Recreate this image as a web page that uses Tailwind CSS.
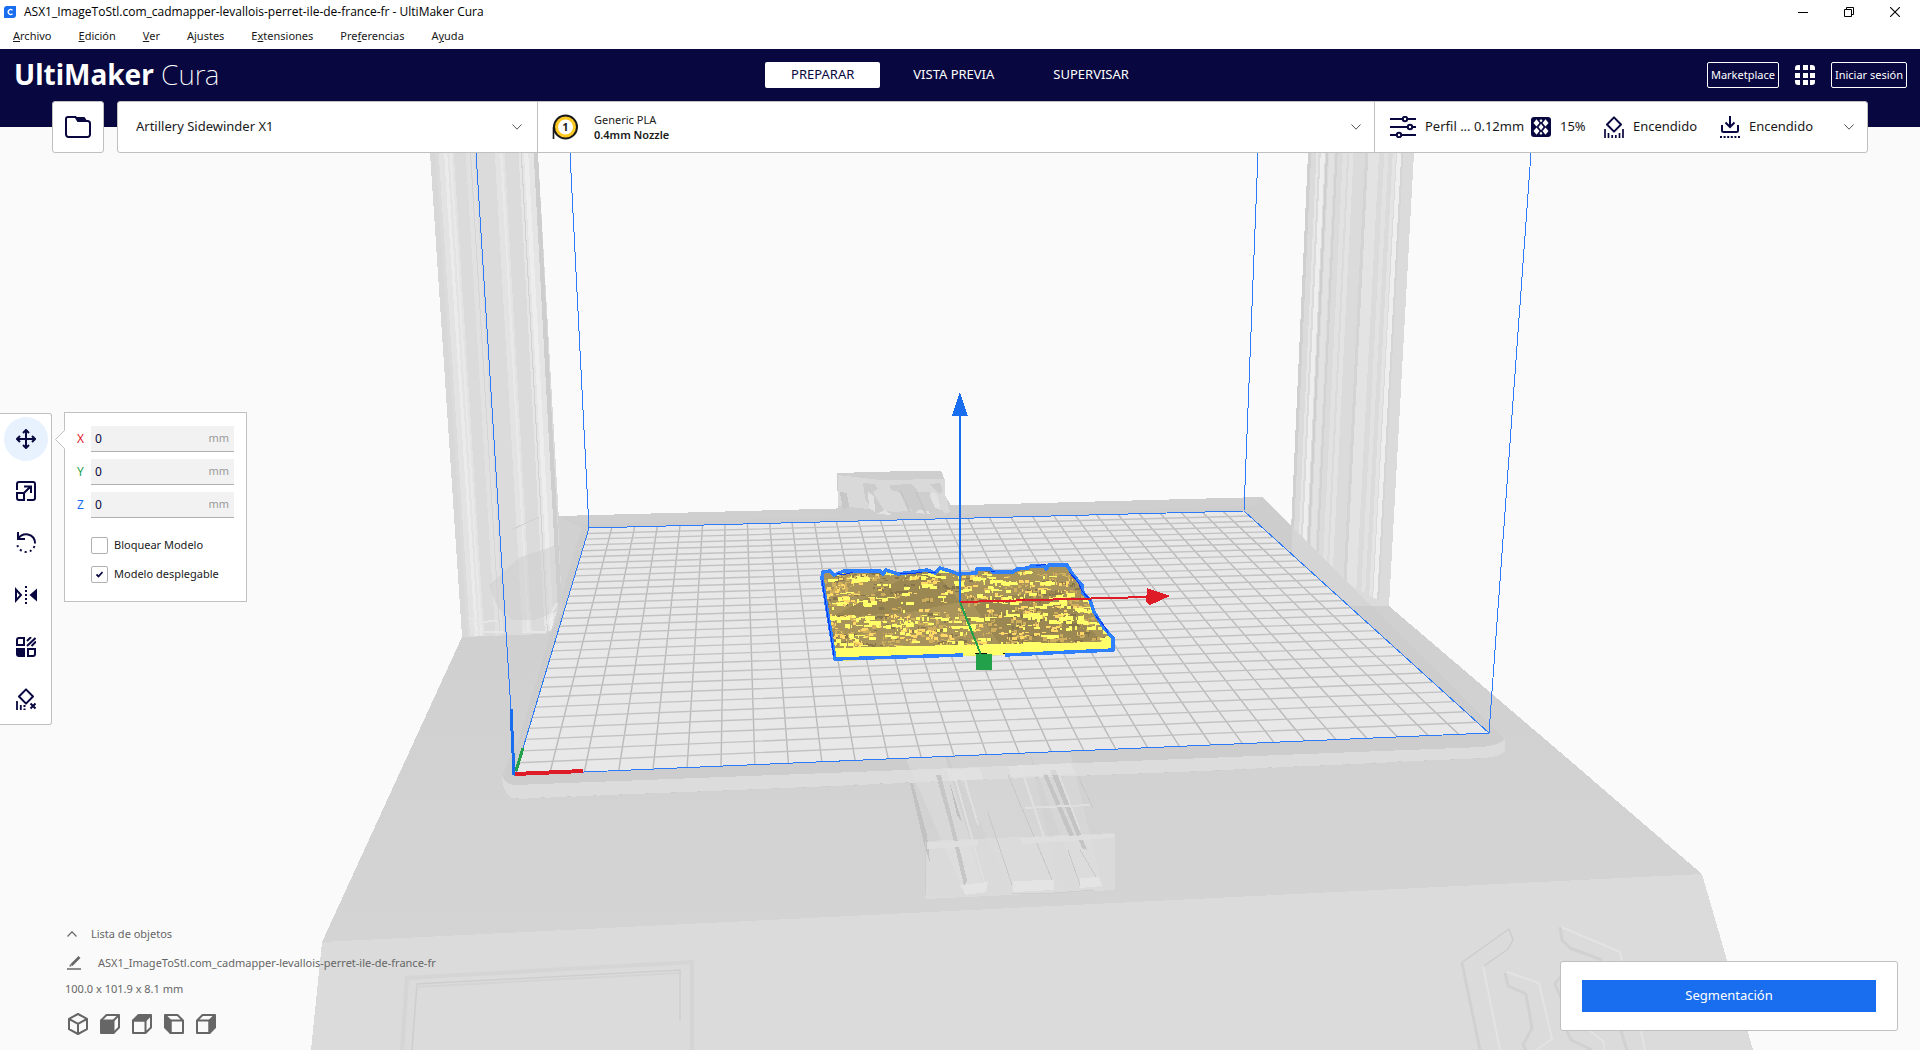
<!DOCTYPE html>
<html lang="es">
<head>
  <meta charset="UTF-8">
  <meta name="viewport" content="width=device-width, initial-scale=1.0">
  <title>UltiMaker Cura</title>
  <script src="https://cdn.jsdelivr.net/npm/@tailwindcss/browser@4"></script>
</head>
<body class="h-screen flex flex-col overflow-hidden bg-[#fafafa] font-['Noto_Sans',sans-serif] text-[11px] text-[#191919]">

  <!-- Title bar -->
  <div class="flex items-center justify-between h-6 bg-white text-black shrink-0">
    <div class="flex items-center gap-2 pl-1">
      <svg class="w-3 h-3" viewBox="0 0 12 12"><path d="M3 0h9v9a3 3 0 0 1-3 3H0V3a3 3 0 0 1 3-3z" fill="#196ef0"/><path d="M8.500 4.200A2.500 2.500 0 1 0 8.500 7.800" fill="none" stroke="#fff" stroke-width="1.300"/></svg>
      <span class="font-['Open_Sans',sans-serif] text-xs">ASX1_ImageToStl.com_cadmapper-levallois-perret-ile-de-france-fr - UltiMaker Cura</span>
    </div>
    <div class="flex items-center gap-9 pr-5">
      <button aria-label="Minimizar"><svg class="w-2.5 h-2.5" viewBox="0 0 10 10"><path d="M0 5.500h10" stroke="#000"/></svg></button>
      <button aria-label="Restaurar"><svg class="w-2.5 h-2.5" viewBox="0 0 10 10" fill="none" stroke="#000"><path d="M.5 2.500h7v7h-7zM2.500 2.500v-2h7v7h-2"/></svg></button>
      <button aria-label="Cerrar"><svg class="w-2.5 h-2.5" viewBox="0 0 10 10"><path d="M0 0l10 10M10 0L0 10" stroke="#000" stroke-width="1.100"/></svg></button>
    </div>
  </div>

  <!-- Menu -->
  <nav class="flex items-center gap-[27px] h-[25px] pl-[13px] bg-white shrink-0">
    <button><u>A</u>rchivo</button>
    <button><u>E</u>dición</button>
    <button><u>V</u>er</button>
    <button>A<u>j</u>ustes</button>
    <button>E<u>x</u>tensiones</button>
    <button>Pre<u>f</u>erencias</button>
    <button>A<u>y</u>uda</button>
  </nav>

  <!-- Header, the toolbar hangs out of it -->
  <header class="relative z-10 h-[78px] bg-[#08073f] text-white shrink-0">
    <div class="grid grid-cols-[1fr_auto_1fr] items-center h-[52px]">
      <div class="pl-[14px] pb-0.5 text-[28px] leading-none"><span class="font-bold">UltiMaker</span> <span class="font-extralight">Cura</span></div>
      <div class="flex gap-[7px] text-[13px]">
        <button class="h-[26px] px-[26px] rounded-xs bg-white text-[#08073f]">PREPARAR</button>
        <button class="h-[26px] px-[26px]">VISTA PREVIA</button>
        <button class="h-[26px] px-[26px]">SUPERVISAR</button>
      </div>
      <div class="flex items-center justify-end gap-4 pr-[13px]">
        <button class="h-[26px] px-[3px] border border-white rounded-xs">Marketplace</button>
        <button aria-label="Aplicaciones"><svg class="w-5 h-5" viewBox="0 0 20 20" fill="#fff"><path d="M3 0h2v5H0V3a3 3 0 0 1 3-3zM8 0h5v5H8zM15 0h2a3 3 0 0 1 3 3v2h-5zM0 8h5v5H0zM8 8h5v5H8zM15 8h5v5h-5zM0 15h5v5H3a3 3 0 0 1-3-3zM8 15h5v5H8zM15 15h5v2a3 3 0 0 1-3 3h-2z"/></svg></button>
        <button class="h-[26px] px-[3px] border border-white rounded-xs">Iniciar sesión</button>
      </div>
    </div>

    <div class="flex gap-[13px] px-[52px] h-[52px] text-[#191919]">
      <button aria-label="Abrir archivo" class="grid place-items-center w-[52px] h-[52px] bg-white border border-[#c0c0c0] rounded-[3px]">
        <svg class="w-[26px] h-[22px]" viewBox="0 0 26 22"><path d="M3 1h7.500l2.500 4h9.500a2.500 2.500 0 0 1 2.500 2.500V18.500a2.500 2.500 0 0 1-2.500 2.500H3.500A2.500 2.500 0 0 1 1 18.500V3a2 2 0 0 1 2-2z" fill="none" stroke="#08073f" stroke-width="2"/><path d="M10.500 1h9l3 4.500h-9.500z" fill="#08073f"/></svg>
      </button>
      <div class="flex flex-1 h-[52px] bg-white border border-[#c0c0c0] rounded-[3px] text-[13px]">
        <button class="flex items-center justify-between w-[420px] pl-[18px] pr-[15px] border-r border-[#c0c0c0]">
          <span>Artillery Sidewinder X1</span>
          <svg class="w-2.5 h-1.5" viewBox="0 0 10 6"><path d="M.5.5L5 5.200 9.500.5" fill="none" stroke="#555"/></svg>
        </button>
        <button class="flex flex-1 items-center pl-[14px] pr-[13px] border-r border-[#c0c0c0] text-left text-[11px]">
          <svg class="w-[26px] h-[26px]" viewBox="0 0 26 26"><circle cx="13.500" cy="13" r="11.500" fill="#ffc924" stroke="#191919" stroke-width="2"/><path d="M1.500 25V13" stroke="#191919" stroke-width="1.600"/><circle cx="13.500" cy="13" r="7.500" fill="#fff"/><text x="13.500" y="17" text-anchor="middle" font-size="11" font-weight="700" fill="#191919">1</text></svg>
          <span class="flex-1 pl-4 leading-[15px]">Generic PLA<br><b class="font-semibold">0.4mm Nozzle</b></span>
          <svg class="w-2.5 h-1.5" viewBox="0 0 10 6"><path d="M.5.5L5 5.200 9.500.5" fill="none" stroke="#555"/></svg>
        </button>
        <button class="flex items-center w-[492px] pl-[15px] pr-[13px]">
          <svg class="w-[26px] h-[22px]" viewBox="0 0 26 22" fill="none" stroke="#08073f" stroke-width="2"><path d="M0 3h12M18 3h8M0 11h17M23 11h3M0 19h6M12 19h14"/><circle cx="15" cy="3" r="2.200"/><circle cx="20" cy="11" r="2.200"/><circle cx="9" cy="19" r="2.200"/></svg>
          <span class="w-[115px] pl-[9px] text-left whitespace-nowrap">Perfil ... 0.12mm</span>
          <svg class="w-5 h-5" viewBox="0 0 20 20"><rect width="20" height="20" rx="3" fill="#08073f"/><g fill="#fff"><path d="M5.500 2.200L8.500 6 5.500 9.500 2.500 6zM14.500 2.200l3 3.800-3 3.500-3-3.500zM10 6.800l2.500 3.200-2.500 3.200L7.500 10zM5.500 10.500l3 3.500-3 3.800-3-3.800zM14.500 10.500l3 3.500-3 3.800-3-3.800zM10 2l1.500 1.700L10 5.300 8.500 3.700zM10 14.700l1.500 1.600L10 18l-1.500-1.700z"/></g></svg>
          <span class="w-[53px] pl-[9px] text-left">15%</span>
          <svg class="w-5 h-[22px]" viewBox="0 0 20 22" fill="none" stroke="#08073f" stroke-width="2"><path d="M10 1.400L17 8.500 10 15.600 3 8.500z" stroke-linejoin="round"/><path d="M1 22v-9M4.500 22v-5M8.200 22v-3M11.800 22v-3M15.500 22v-5M19 22v-9" stroke-width="1.700"/></svg>
          <span class="w-[96px] pl-[9px] text-left">Encendido</span>
          <svg class="w-5 h-[22px]" viewBox="0 0 20 22" fill="none" stroke="#08073f" stroke-width="2"><path d="M10 0v10.500M5.500 6.500L10 11l4.500-4.500M2 9v5.500a1.500 1.500 0 0 0 1.500 1.500h13a1.500 1.500 0 0 0 1.500-1.500V9"/><path d="M0 21h20" stroke-dasharray="2 1.600"/></svg>
          <span class="flex-1 pl-[9px] text-left">Encendido</span>
          <svg class="w-2.5 h-1.5" viewBox="0 0 10 6"><path d="M.5.5L5 5.200 9.500.5" fill="none" stroke="#555"/></svg>
        </button>
      </div>
    </div>
  </header>

  <main class="relative flex flex-1 flex-col justify-between min-h-0">
    <!-- 3D view -->
    <svg class="absolute inset-0 w-full h-full" viewBox="0 127 1920 923" preserveAspectRatio="xMidYMid slice" shape-rendering="crispEdges">
      <defs>
        <linearGradient id="top" x1="0" y1="0" x2="0" y2="1"><stop offset="0" stop-color="#cfcfcf"/><stop offset="1" stop-color="#d4d4d4"/></linearGradient>
        <clipPath id="modelClip"><path d="M823 572l7-1 4 4 10-4h36l3 3 3-4 12 4 29-4 8 3 5-5 13 4 5 2 18-1 1-4h13l3 3h20l4-3 11-1 3-2h14l1 3 3-4h18l6 10 9 10 1 8 7 7 4 12 10 16 9 10v12l-109 5-41 1-128 5-13-81z"/></clipPath>
      </defs>

      <!-- base -->
      <path d="M462 637L545 630 1300 560 1350 606 1389 606 1560 752 1702 874 322 942z" fill="url(#top)"/>
      <path d="M322 942L1702 874 1753 1050H311z" fill="#dbdbdb"/>

      <!-- columns, streaks are filled in below -->
      <path d="M430 153H538L559 520 563 620 545 634 462 637z" fill="#dbdbdb"/>
      <g id="leftColumn"></g>
      <path d="M489 585L520 557 556 545 561 610 535 620H512L498 608z" fill="#cdcdcd" opacity=".5"/>
      <path d="M468 618l10 4 20 -1M474 632h30M522 632h24M545 625l12-22" fill="none" stroke="#e6e6e6" stroke-width="2"/>
      <path d="M511 530l28-13" stroke="#d0d0d0"/>
      <path d="M1308 153H1414L1389 606H1350L1292 553z" fill="#dbdbdb"/>
      <g id="rightColumn"></g>

      <!-- heated bed -->
      <path d="M558 516L1262 497 1505 739Q1507 747 1483 748L515 785Q500 784 503 774L543 650 562 610z" fill="#cdcdcd"/>
      <path d="M558 516L582 527 520 735 503 774 543 650 562 610z" fill="#d1d1d1"/>
      <path d="M558 516L1262 497 1252 506 580 524z" fill="#cfcfcf"/>
      <path d="M1292 527L1292 553 1350 606H1372L1372 606z" fill="#dadada" opacity=".6"/>
      <path d="M502 774Q503 784 515 785L880 771 1180 759 1483 747Q1503 744 1505 738V751Q1500 757 1483 758L1180 772 880 784 515 799Q502 796 502 774z" fill="#dcdcdc"/>
      <path d="M515 799L880 784 1180 772 1483 758" fill="none" stroke="#cbcbcb" stroke-dasharray="4 22"/>

      <!-- bracket at the back -->
      <path d="M837 473L870 472 910 471 941 471 945 480V495L956 515 842 520 838 508z" fill="#cecece"/>
      <path d="M838 475L880 480 945 479V494L950 512 945 514 930 492H915L918 510 895 512 860 508 838 506z" fill="#d9d9d9"/>
      <path d="M863 483l12 1 3 5-5 3 12 20h-12l-8-14zM890 485l22-1 5 6 8 20h-14l-12-18-8-2zM930 484l10-1 3 8-4 3z" fill="#cccccc"/>
      <path d="M868 492l6 4 1 16-6-4zM931 492l6 2 4 16-6-2-5-12zM877 514l8-4 7 5zM915 513l4-3 10 1 1 3z" fill="#e2e2e2"/>
      <path d="M841 493l5 1 2 12-4 2zM900 490l10 22M916 492l10 22" fill="#c8c8c8" stroke="#c6c6c6" stroke-width="2"/>

      <!-- bed grid -->
      <path d="M589 528L1244 511 1489 733 515 775z" fill="#e8e8e8"/>
      <g shape-rendering="auto" fill="none" stroke-width="1.400">
        <path id="gridCols" stroke="#bababa"/>
        <path id="gridRows" stroke="#c2c2c2"/>
      </g>

      <!-- rails in front -->
      <path d="M925 841L1115 833V890L925 899z" fill="#e0e0e0" opacity=".55"/>
      <path d="M905 757L945 756 985 892 965 894z" fill="#e0e0e0" opacity=".4"/>
      <path d="M947 755L1030 753 1060 892 1014 893z" fill="#dedede" opacity=".35"/>
      <path d="M1030 753L1070 752 1103 887 1080 889z" fill="#e0e0e0" opacity=".35"/>
      <path d="M910 783L913 783 927 835 930 862 925 848z" fill="#c2c2c2"/>
      <path d="M936 775L950 825 965 890 967 880 955 830 941 775z" fill="#c6c6c6"/>
      <path d="M949 780L962 822 957 815z" fill="#bfbfbf"/>
      <path d="M1050 770L1056 770 1087 850 1082 848zM1043 774L1047 774 1074 835 1070 838z" fill="#c4c4c4"/>
      <path d="M953 770L985 885M962 770L978 825M1055 765L1080 830M1020 765L1045 840" fill="none" stroke="#dfdfdf" stroke-width="2"/>
      <path d="M988 813L1012 885M1008 775L1027 820 1053 882M1078 776L1093 808M1080 850L1101 885M1068 850L1080 885" fill="none" stroke="#c8c8c8"/>
      <path d="M925 841V895M1012 893l42 0 40-3" fill="none" stroke="#cdcdcd"/>
      <path d="M927 842L978 840V846L927 849zM1020 838L1114 834V838L1022 844zM1025 807L1090 804V806L1025 809z" fill="#dfdfdf"/>
      <path d="M947 769L980 768 983 779 950 781zM1008 766L1070 763 1076 774 1012 777z" fill="#e5e5e5" opacity=".6"/>
      <path d="M960 885L988 882 986 892 966 895zM1013 881L1054 880V890L1013 892zM1080 878L1099 877 1102 886 1080 888z" fill="#e4e4e4"/>

      <!-- display and badge on the front face -->
      <g shape-rendering="auto">
      <path d="M402 1050L407 978 692 962V1050" fill="none" stroke="#d5d5d5" stroke-width="4"/>
      <path d="M412 1050L417 984 680 970V1020" fill="none" stroke="#cecece" stroke-width="1.500"/>
      <path d="M416 987L680 973" stroke="#d4d4d4" stroke-width="2"/>
      </g>
      <g fill="none" stroke-linejoin="round" stroke-width="1.500" shape-rendering="auto">
        <path d="M1461 963L1509 929 1513 940 1508 949 1484 966" stroke="#cdcdcd"/>
        <path d="M1483 966L1500 1050M1561 927L1620 952 1622 962M1641 1031L1645 1050M1507 972L1539 983 1552 1039 1536 1050" stroke="#e3e3e3" stroke-width="2"/>
        <path d="M1462 963L1480 1050M1560 927L1562 940 1570 948 1602 960M1505 973L1508 986 1526 994 1532 1028 1523 1045 1526 1050M1621 1031L1627 1050M1567 1031L1571 1040 1592 1050M1560 977L1555 984 1562 1000" stroke="#d1d1d1" stroke-width="3"/>
        <path d="M1590 1031L1604 1042V1050" stroke="#e5e5e5"/>
      </g>

      <!-- build volume -->
      <g fill="none" stroke="#2b7bf8">
        <path d="M515 775L589 528 1244 511 1489 733z"/>
        <path d="M589 528L570 153M515 775L476 153M1244 511L1258 153M1489 733L1531 153"/>
      </g>
      <path d="M515 774L583 771" stroke="#dd1c28" stroke-width="4"/>
      <path d="M516 771L523 748" stroke="#22a04a" stroke-width="3"/>
      <path d="M514 775L511 709" stroke="#196ef0" stroke-width="3"/>

      <!-- city model -->
      <g clip-path="url(#modelClip)">
        <path d="M815 555H1120V665H815z" fill="#a8935a"/>
        <path d="M930 565L960 602 910 612 830 618 880 590zM970 600L1060 590 1100 640 1000 645z" fill="#94814e" opacity=".7"/>
        <path id="shade" fill="#86744a"/>
        <path id="tan" fill="#cfae5c"/>
        <path id="orange" fill="#ffd866"/>
        <path id="yellow" fill="#ffff69"/>
        <path d="M833 648L960 645 1100 642 1105 637 1113 634V652L833 662z" fill="#ffff69"/>
      </g>
      <g fill="none" stroke="#2f80ff" stroke-width="3.500" stroke-linejoin="round">
        <path d="M963 655l-128 4-13-81 1-6 7-1 4 4 10-4h36l3 3 3-4 12 4 29-4 8 3 5-5 13 4 5 2 18-1 1-4h13l3 3h20l4-3 11-1 3-2h14l1 3 3-4h18l6 10 9 10 1 8 7 7 4 12 10 16 9 10v12l-108 5"/>
        <path d="M837 573l6 2 10-3M900 573l10 1 12-2M928 572l8 1M991 571l4 1M1036 566l10-2M1069 572l9 10 4 9 9 10M1095 615l10 12 3 6M822 580l12 76" stroke="#0b35f0" stroke-width="1"/>
      </g>
      <path d="M975 653h12M1003 653h2" stroke="#111"/>

      <!-- move gizmo -->
      <path d="M960 602V415" stroke="#196ef0" stroke-width="2"/>
      <path d="M960 392L968 416H952z" fill="#196ef0"/>
      <path d="M960 602L1147 597" stroke="#dd1c28" stroke-width="2"/>
      <path d="M1147 588L1170 596 1150 605 1146 602z" fill="#dd1c28"/>
      <path d="M960 602L981 655" stroke="#22a04a" stroke-width="2"/>
      <path d="M976 654h16v16h-16z" fill="#22a04a"/>
    </svg>

    <!-- Tools -->
    <div class="relative flex items-start gap-[13px] pt-[285px]">
      <div class="flex flex-col gap-2 w-[52px] h-[312px] pt-[3px] pl-1 mt-px bg-white border border-l-0 border-[#c0c0c0] rounded-r-[3px]">
        <button aria-label="Mover" class="grid place-items-center w-11 h-11 rounded-full bg-[#e8f2fe]">
          <svg class="w-5 h-5" viewBox="0 0 20 20" fill="none" stroke="#08073f" stroke-width="2"><path d="M10 1.500v17M1.500 10h17M7 4l3-3 3 3M7 16l3 3 3-3M4 7l-3 3 3 3M16 7l3 3-3 3"/></svg>
        </button>
        <button aria-label="Escalar" class="grid place-items-center w-11 h-11">
          <svg class="w-5 h-5" viewBox="0 0 20 20" fill="none" stroke="#08073f" stroke-width="2"><path d="M1 9V3a2 2 0 0 1 2-2h14a2 2 0 0 1 2 2v14a2 2 0 0 1-2 2h-6M1 12h7v7H3a2 2 0 0 1-2-2zM8 12l6-6M8 5.500h7V12"/></svg>
        </button>
        <button aria-label="Rotar" class="grid place-items-center w-11 h-11">
          <svg class="w-5 h-[22px]" viewBox="0 0 20 22" fill="none" stroke="#08073f" stroke-width="2"><path d="M2 0v7h7M2.500 6.500C5 2.500 9 2 12 2.500c4.500 1 7 4.500 7 9"/><path d="M18.500 14C17 18 14 20 10 20S1.500 17 1 11" stroke-dasharray="2 3.200"/></svg>
        </button>
        <button aria-label="Espejo" class="grid place-items-center w-11 h-11">
          <svg class="w-[22px] h-5" viewBox="0 0 22 20"><path d="M1 4.500v11L6 10z" fill="none" stroke="#08073f" stroke-width="2"/><path d="M22 3.500v13L14.500 10z" fill="#08073f"/><path d="M11 1v19" stroke="#08073f" stroke-width="2" stroke-dasharray="2 2"/></svg>
        </button>
        <button aria-label="Ajustes por modelo" class="grid place-items-center w-11 h-11">
          <svg class="w-5 h-5" viewBox="0 0 20 20" fill="none" stroke="#08073f" stroke-width="2"><path d="M1 3a2 2 0 0 1 2-2h5v7H1zM12 12h7v5a2 2 0 0 1-2 2h-5z"/><path d="M0 11h9v9H3a3 3 0 0 1-3-3z" fill="#08073f" stroke="none"/><path d="M11 4l4-4M11 9l8.500-8M15.500 9L20 4.500"/></svg>
        </button>
        <button aria-label="Bloqueador de soporte" class="grid place-items-center w-11 h-11">
          <svg class="w-5 h-[22px]" viewBox="0 0 20 22" fill="none" stroke="#08073f" stroke-width="2"><path d="M10 1.400L17 8.500 10 15.600 3 8.500z" stroke-linejoin="round"/><path d="M1 22v-9M4.800 22v-5" stroke-width="1.800"/><path d="M8.500 17v5" stroke-dasharray="2 1.500"/><path d="M14.500 15.500l5 5M19.500 15.500l-5 5"/></svg>
        </button>
      </div>

      <div class="relative w-[183px] h-[190px] pt-[13px] px-[12px] -ml-px bg-white border border-[#c0c0c0]">
        <svg class="absolute -left-[10px] top-[17px] w-[10px] h-5" viewBox="0 0 10 20"><path d="M10 0L.5 9.500 10 19z" fill="#fff"/><path d="M9.500 .5L.5 9.500 9.500 18.500" fill="none" stroke="#c0c0c0"/></svg>
        <div class="flex flex-col gap-[7px]">
          <div class="flex items-center h-[26px]">
            <label for="x" class="w-[14px] text-xs text-[#dd1c28]">X</label>
            <div class="flex items-center flex-1 h-full px-1 bg-[#f2f2f2] border-b border-[#b0b0b0]"><input id="x" value="0" class="w-20 flex-1 outline-none text-xs text-[#08073f]"><span class="text-[#9a9a9a] pr-px">mm</span></div>
          </div>
          <div class="flex items-center h-[26px]">
            <label for="y" class="w-[14px] text-xs text-[#22a04a]">Y</label>
            <div class="flex items-center flex-1 h-full px-1 bg-[#f2f2f2] border-b border-[#b0b0b0]"><input id="y" value="0" class="w-20 flex-1 outline-none text-xs text-[#08073f]"><span class="text-[#9a9a9a] pr-px">mm</span></div>
          </div>
          <div class="flex items-center h-[26px]">
            <label for="z" class="w-[14px] text-xs text-[#196ef0]">Z</label>
            <div class="flex items-center flex-1 h-full px-1 bg-[#f2f2f2] border-b border-[#b0b0b0]"><input id="z" value="0" class="w-20 flex-1 outline-none text-xs text-[#08073f]"><span class="text-[#9a9a9a] pr-px">mm</span></div>
          </div>
        </div>
        <div class="flex flex-col gap-3 pt-[19px] pl-[14px]">
          <label class="flex items-center gap-[6px] h-[17px]"><input type="checkbox" class="appearance-none w-[17px] h-[17px] bg-white border border-[#b0b0b0] rounded-[2px]">Bloquear Modelo</label>
          <label class="relative flex items-center gap-[6px] h-[17px]"><input type="checkbox" checked class="appearance-none w-[17px] h-[17px] bg-white border border-[#b0b0b0] rounded-[2px]">Modelo desplegable
            <svg class="absolute left-[5px] top-[5px] w-[7px] h-[7px]" viewBox="0 0 7 7"><path d="M.5 3.500L2.500 5.500 6.500 1" fill="none" stroke="#08073f" stroke-width="1.800"/></svg>
          </label>
        </div>
      </div>
    </div>

    <!-- Object list and slice button -->
    <div class="relative flex justify-between items-end pl-[65px] pr-[22px] text-[#666]">
      <div class="pb-[15px]">
        <button class="flex items-center h-[18px] pl-[2px]">
          <svg class="w-2.5 h-1.5 mr-[14px]" viewBox="0 0 10 6"><path d="M.5 5.500L5 .8 9.500 5.500" fill="none" stroke="#666" stroke-width="1.200"/></svg>Lista de objetos
        </button>
        <button class="flex items-center h-[18px] mt-[11px] pl-[2px]">
          <svg class="w-[14px] h-[14px] mr-[17px]" viewBox="0 0 14 14"><path d="M0 13h14" stroke="#666" stroke-width="1.500"/><path d="M4.500 9L12.500 1" stroke="#666" stroke-width="2.600"/><path d="M3 8l2 2-2.500 .8z" fill="#666"/></svg>ASX1_ImageToStl.com_cadmapper-levallois-perret-ile-de-france-fr
        </button>
        <p class="h-[18px] leading-[18px] mt-2">100.0 x 101.9 x 8.1 mm</p>
        <div class="flex gap-3 mt-[15px] pl-[3px]">
          <button aria-label="Vista 3D"><svg class="w-5 h-[22px] block" viewBox="0 0 20 22" fill="none" stroke="#666" stroke-width="2" stroke-linejoin="round"><path d="M10 1l9 4.800v10.400L10 21l-9-4.800V5.800zM1 5.800l9 5 9-5M10 10.800V21"/></svg></button>
          <button aria-label="Vista frontal"><svg class="w-5 h-[22px] block" viewBox="0 0 20 22" fill="none" stroke="#666" stroke-width="2" stroke-linejoin="round"><path d="M1 7.500L6.500 2H19v12.500L13.500 20M13.500 7.500L19 2"/><path d="M1 7.500h12.500V20H1z" fill="#666"/></svg></button>
          <button aria-label="Vista superior"><svg class="w-5 h-[22px] block" viewBox="0 0 20 22" fill="none" stroke="#666" stroke-width="2" stroke-linejoin="round"><path d="M1 7.500h12.500V20H1zM19 2v12.500L13.500 20"/><path d="M1 7.500L6.500 2H19l-5.500 5.500z" fill="#666"/></svg></button>
          <button aria-label="Vista izquierda"><svg class="w-5 h-[22px] block" viewBox="0 0 20 22" fill="none" stroke="#666" stroke-width="2" stroke-linejoin="round"><path d="M6.500 7.500H19V20H6.500zM1 2h12.500L19 7.500"/><path d="M1 2l5.500 5.500V20L1 14.500z" fill="#666"/></svg></button>
          <button aria-label="Vista derecha"><svg class="w-5 h-[22px] block" viewBox="0 0 20 22" fill="none" stroke="#666" stroke-width="2" stroke-linejoin="round"><path d="M1 7.500h12.500V20H1zM1 7.500L6.500 2H19"/><path d="M13.500 7.500L19 2v12.500L13.500 20z" fill="#666"/></svg></button>
        </div>
      </div>
      <div class="w-[338px] px-[21px] py-[18px] mb-[19px] bg-white border border-[#c0c0c0] rounded-[3px]">
        <button class="w-full h-8 bg-[#196ef0] text-white text-[13px]">Segmentación</button>
      </div>
    </div>
  </main>

  <script>
    const SVG = 'http://www.w3.org/2000/svg';

    // Perspective map of the unit square onto the bed corners
    const bed = [[589, 528], [1244, 511], [1489, 733], [515, 775]];
    function project(u, v) {
      const [[x0, y0], [x1, y1], [x2, y2], [x3, y3]] = bed;
      const dx1 = x1 - x2, dx2 = x3 - x2, dx3 = x0 - x1 + x2 - x3;
      const dy1 = y1 - y2, dy2 = y3 - y2, dy3 = y0 - y1 + y2 - y3;
      const det = dx1 * dy2 - dx2 * dy1;
      const g = (dx3 * dy2 - dx2 * dy3) / det;
      const h = (dx1 * dy3 - dx3 * dy1) / det;
      const w = g * u + h * v + 1;
      return [
        ((x1 - x0 + g * x1) * u + (x3 - x0 + h * x3) * v + x0) / w,
        ((y1 - y0 + g * y1) * u + (y3 - y0 + h * y3) * v + y0) / w
      ];
    }

    let cols = '', rows = '';
    for (let i = 1; i < 30; i++) {
      const t = i / 30;
      cols += `M${project(t, 0)}L${project(t, 1)}`;
      rows += `M${project(0, t)}L${project(1, t)}`;
    }
    document.getElementById('gridCols').setAttribute('d', cols);
    document.getElementById('gridRows').setAttribute('d', rows);

    // Streaks: [from, to, colour] as fractions of the column width
    function column(id, top, bottom, streaks) {
      const g = document.getElementById(id);
      const at = (line, t) => [line[0][0] + (line[1][0] - line[0][0]) * t, line[0][1] + (line[1][1] - line[0][1]) * t];
      streaks.forEach(([a, b, color]) => {
        const p = document.createElementNS(SVG, 'path');
        p.setAttribute('d', `M${at(top, a)}L${at(top, b)}L${at(bottom, b)}L${at(bottom, a)}z`);
        p.setAttribute('fill', color);
        g.append(p);
      });
    }
    column('leftColumn', [[430, 153], [538, 153]], [[462, 637], [563, 630]], [
      [0, .05, '#d8d8d8'], [.08, .22, '#e3e3e3'], [.13, .16, '#ebebeb'], [.18, .2, '#e9e9e9'], [.33, .41, '#e1e1e1'], [.37, .38, '#d6d6d6'],
      [.6, .69, '#e3e3e3'], [.65, .67, '#e9e9e9'], [.82, .96, '#e5e5e5'], [.84, .85, '#d2d2d2'], [.87, .91, '#ededed'], [.96, 1, '#cecece']
    ]);
    column('rightColumn', [[1308, 153], [1414, 153]], [[1290, 553], [1389, 606]], [
      [0, .03, '#d0d0d0'], [.08, .1, '#e6e6e6'], [.12, .16, '#eeeeee'], [.17, .19, '#cfcfcf'], [.2, .25, '#e2e2e2'], [.26, .28, '#d2d2d2'], [.33, .37, '#e2e2e2'],
      [.39, .43, '#e3e3e3'], [.54, .57, '#d4d4d4'], [.57, .67, '#e3e3e3'], [.72, .76, '#e2e2e2'], [.8, .83, '#e4e4e4'], [.84, .88, '#eeeeee'], [.88, .9, '#d5d5d5']
    ]);

    // Buildings of the city model, kept in loose blocks
    let seed = 11;
    function rnd() {
      seed = (seed * 16807) % 2147483647;
      return seed / 2147483647;
    }
    function buildings(id, count, w, h) {
      let d = '';
      for (let i = 0; i < count; i++) {
        const cx = 822 + rnd() * 290, cy = 566 + rnd() * 80;
        // leave the avenues open
        if (Math.abs(cy - 606 + (cx - 900) * .06) < 5 && cx > 840 && cx < 990 && rnd() < .85) continue;
        if (Math.abs(cx - 940 - (cy - 570) * .75) < 6 && rnd() < .8) continue;
        const n = 1 + Math.floor(rnd() * 4);
        for (let j = 0; j < n; j++) {
          const x = Math.round(cx + j * w * .7), y = Math.round(cy + rnd() * 2);
          const bw = Math.ceil(rnd() * w), bh = Math.ceil(rnd() * h);
          d += `M${x} ${y}h${bw}v${bh}h-${bw}z`;
        }
      }
      document.getElementById(id).setAttribute('d', d);
    }
    buildings('shade', 150, 5, 3);
    buildings('tan', 240, 4, 4);
    buildings('orange', 200, 4, 3);
    buildings('yellow', 210, 8, 4);
  </script>
</body>
</html>
